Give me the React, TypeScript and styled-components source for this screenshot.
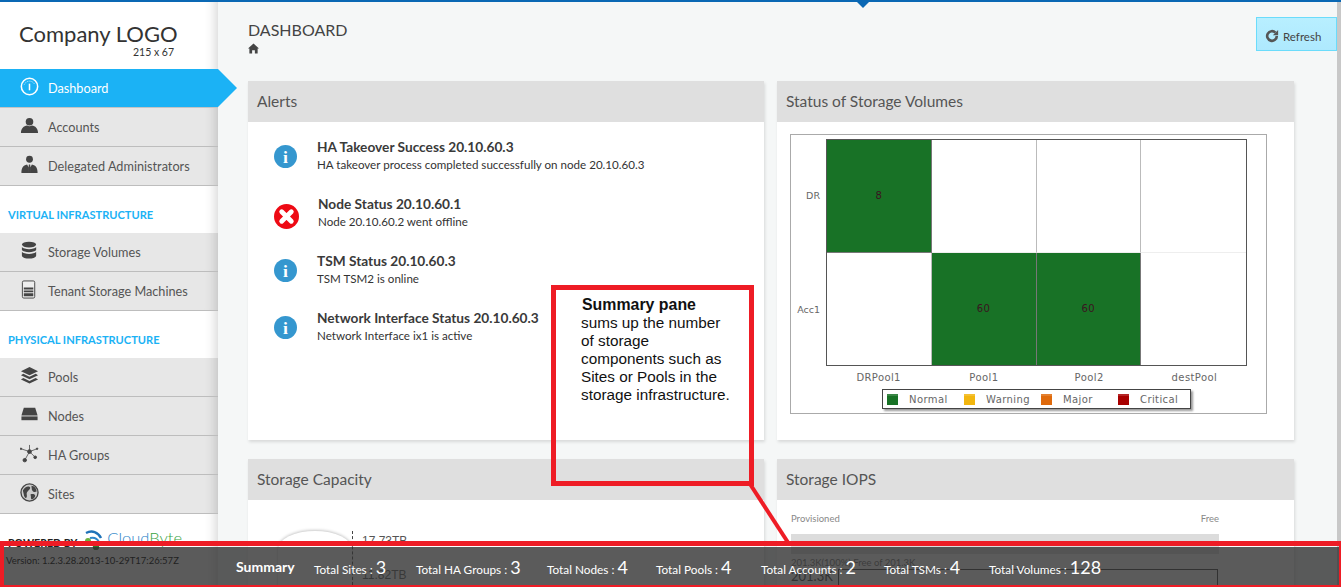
import * as React from 'react';
import styled, { createGlobalStyle } from 'styled-components';

const Global = createGlobalStyle`
    html, body { margin:0; padding:0; background:#f5f7f7; }
    body { font-family:"Lato","Noto Sans",sans-serif; color:#444; }
    * { box-sizing:border-box; }
`

const Page = styled.div`
    position:relative;
    width:1341px;
    height:587px;
    overflow:hidden;
    border-top:2px solid #0a68b4;
    display:flex;
`
const Notch = styled.div`
    position:absolute;
    top:-1px;
    left:856px;
    border:7px solid transparent;
    border-top-color:#0a68b4;
    border-bottom:0;
`
const ScrollEdge = styled.div`
    position:absolute;
    top:0;
    right:0;
    bottom:0;
    width:4px;
    background:#c8c8c8;
`

/* sidebar */
const Sidebar = styled.aside`
    position:relative;
    z-index:2;
    width:218px;
    flex:none;
    background:#fff;
    box-shadow:inset -14px 0 12px -12px rgba(0,0,0,.18);
`
const Logo = styled.div`
    height:67px;
    padding:17px 0 0 19px;
    font-size:22px;
    line-height:30px;
    color:#333;
    small {
        display:block;
        font-size:10.5px;
        line-height:11px;
        margin:-2px 0 0 114px;
    }
`
const NavRow = styled.div<{ $active?: boolean }>`
    position:relative;
    height:39px;
    display:flex;
    align-items:center;
    padding-left:20px;
    gap:9px;
    font-size:12.7px;
    color:${p => p.$active ? '#fff' : '#555'};
    background:${p => p.$active ? '#1bb2f5' : '#e7e7e7'};
    border-bottom:1px solid ${p => p.$active ? '#c4c4c4' : '#bdbdbd'};
    box-shadow:${p => p.$active ? 'none' : 'inset -14px 0 12px -12px rgba(0,0,0,.18)'};
    svg { width:19px; height:19px; flex:none; margin-top:-3px; }
    ${p => p.$active && `
        &::after {
            content:'';
            position:absolute;
            left:100%;
            top:0;
            border-left:19px solid #1bb2f5;
            border-top:19px solid transparent;
            border-bottom:19px solid transparent;
        }
    `}
`
const NavHeading = styled.div`
    height:47px;
    padding:22px 0 0 8px;
    font-size:11.1px;
    line-height:14px;
    font-weight:700;
    color:#1bb2f5;
`
const Powered = styled.div`
    display:flex;
    align-items:center;
    height:40px;
    padding:18px 0 0 8px;
    font-size:10.6px;
    font-weight:700;
    color:#222;
    svg { width:22px; height:20px; margin:-6px 0 0 8px; flex:none; }
`
const BrandName = styled.span`
    font-size:16.5px;
    font-weight:300;
    color:#2e86c9;
    margin-top:-10px;
    em { font-style:normal; color:#3aa33f; }
`

/* content */
const Main = styled.main`
    flex:1;
    padding:17px 0 0 30px;
    min-width:0;
`
const PageHead = styled.div`
    position:relative;
    height:62px;
    h1 {
        margin:0;
        font-size:16px;
        font-weight:400;
        line-height:21px;
        color:#444;
    }
    svg { display:block; width:11px; height:11px; margin-top:3px; }
`
const RefreshButton = styled.button`
    position:absolute;
    top:-2px;
    left:1008px;
    width:81px;
    height:34px;
    display:flex;
    align-items:center;
    gap:4px;
    padding:4px 0 0 8px;
    font:11.5px "Lato","Noto Sans",sans-serif;
    color:#444;
    background:linear-gradient(#b8efff,#aee9fe);
    border:1px solid #6bdcfb;
    svg { width:14px; height:14px; margin:0; }
`
const Grid = styled.div`
    display:grid;
    grid-template-columns:516px 517px;
    grid-template-rows:359px 200px;
    column-gap:13px;
    row-gap:19px;
`
const Card = styled.section`
    background:#fff;
    box-shadow:1px 2px 3px rgba(0,0,0,.12);
`
const CardHead = styled.h2`
    margin:0;
    height:41px;
    padding:0 9px;
    font-size:15.5px;
    font-weight:400;
    line-height:41px;
    color:#555;
    background:#dfdfdf;
`
const AlertList = styled.div`
    padding:14px 0 0 26px;
    display:flex;
    flex-direction:column;
    gap:19px;
`
const AlertRow = styled.div<{ $large?: boolean }>`
    height:38px;
    display:flex;
    align-items:center;
    gap:${p => p.$large ? '19px' : '20px'};
    svg {
        width:${p => p.$large ? '25px' : '23px'};
        height:${p => p.$large ? '25px' : '23px'};
        flex:none;
        margin-top:${p => p.$large ? '8px' : '2px'};
    }
    b { display:block; font-size:13.7px; line-height:19px; color:#3a3a3a; }
    span { display:block; font-size:11.6px; line-height:17px; color:#333; }
`

/* heat map */
const ChartFrame = styled.div`
    margin:12px 0 0 13px;
    width:477px;
    height:280px;
    border:1px solid #aaa;
    display:grid;
    grid-template-columns:35px 421px;
    grid-template-rows:227px 23px 20px;
    padding-top:4px;
    font-family:"DejaVu Sans",sans-serif;
    font-size:10px;
    letter-spacing:.4px;
    color:#666;
`
const YAxis = styled.div`
    display:grid;
    grid-template-rows:1fr 1fr;
    text-align:right;
    padding-right:6px;
    font-size:9.5px;
    letter-spacing:0;
    div { align-self:center; }
`
const Heat = styled.div`
    display:grid;
    grid-template-columns:repeat(4,1fr);
    grid-template-rows:1fr 1fr;
    border:1px solid #555;
`
const HeatCell = styled.div<{ $on?: boolean }>`
    display:flex;
    align-items:center;
    justify-content:center;
    color:#3a1420;
    background:${p => p.$on ? '#187226' : '#fff'};
    border-right:1px solid ${p => p.$on ? '#777' : '#bbb'};
    border-bottom:1px solid ${p => p.$on ? '#777' : '#eee'};
    &:nth-child(4n) { border-right:0; }
    &:nth-child(n+5) { border-bottom:0; }
`
const XAxis = styled.div`
    grid-column:2;
    display:grid;
    grid-template-columns:repeat(4,1fr);
    align-items:center;
    text-align:center;
`
const Legend = styled.div`
    grid-column:2;
    justify-self:center;
    width:309px;
    height:20px;
    display:flex;
    align-items:center;
    padding-left:4px;
    background:#fff;
    border:1px solid #444;
    box-shadow:2px 2px 2px rgba(0,0,0,.4);
`
const LegendItem = styled.div<{ $w: number }>`
    width:${p => p.$w}px;
    display:flex;
    align-items:center;
    gap:11px;
`
const Swatch = styled.i<{ $c: string }>`
    width:11px;
    height:11px;
    background:${p => p.$c};
    box-shadow:inset 0 2px 0 rgba(255,255,255,.15);
`

/* lower cards */
const Capacity = styled.div`
    display:flex;
    padding:31px 0 0 30px;
    font-family:"Liberation Sans",sans-serif;
    font-size:12px;
    color:#555;
`
const Cylinder = styled.div`
    width:74px;
    height:60px;
    border-radius:50% 50% 0 0 / 30% 30% 0 0;
    background:#fff;
    box-shadow:0 -1px 3px rgba(0,0,0,.22);
`
const CapacityAxis = styled.div`
    width:10px;
    height:54px;
    border-left:1px dashed #444;
`
const CapacityLabels = styled.div`
    padding-top:3px;
    line-height:14px;
    display:flex;
    flex-direction:column;
    gap:20px;
`
const Iops = styled.div`
    padding:13px 14px 0;
    font-size:9.5px;
    color:#888;
`
const IopsLabels = styled.div`
    display:flex;
    justify-content:space-between;
    width:428px;
`
const IopsBar = styled.div`
    width:428px;
    height:20px;
    margin:10px 0 3px;
    background:#dcdcdc;
`
const IopsNote = styled.div`
    color:#666;
    line-height:12px;
`
const IopsValue = styled.div`
    display:flex;
    gap:5px;
    font-size:13px;
    color:#333;
    line-height:14px;
    i { width:380px; height:30px; border:1px solid #333; }
`

/* summary footer */
const SummaryBar = styled.footer`
    position:absolute;
    z-index:3;
    left:0;
    right:0;
    bottom:0;
    height:46px;
    border:solid #ee1c25;
    border-width:5px 2px 2px 4px;
    &::before {
        content:'';
        position:absolute;
        inset:1px 0 0 0;
        background:rgba(50,50,50,.8);
    }
`
const SummaryItems = styled.div`
    position:relative;
    display:flex;
    align-items:center;
    height:39px;
    padding:2px 0 0 2px;
    color:#fff;
    font-size:11.8px;
`
const Version = styled.div`
    width:230px;
    margin-top:-13px;
    font-size:9.5px;
    color:#222;
`
const SummaryTitle = styled.b`
    width:78px;
    font-size:14px;
`
const Stat = styled.div<{ $w: number }>`
    width:${p => p.$w}px;
    em { font-style:normal; font-size:18px; font-weight:400; margin-left:3px; }
`

/* annotation */
const Callout = styled.div`
    position:absolute;
    z-index:2;
    left:551px;
    top:283px;
    width:203px;
    height:201px;
    padding:5px 0 0 25px;
    border:5px solid #ee1c25;
    font-family:"Liberation Sans",sans-serif;
    font-size:15.3px;
    line-height:18px;
    color:#111;
    p { margin:0; width:153px; }
    b { display:block; font-size:15.9px; line-height:19px; padding-left:1px; }
`
const Leader = styled.svg`
    position:absolute;
    z-index:2;
    left:745px;
    top:480px;
    width:50px;
    height:70px;
`

const Gauge = () => (
    <svg viewBox="0 0 20 20" fill="none" stroke="#fff"><circle cx="10" cy="10" r="8.6" strokeWidth="1.6" /><path d="M10 7v7" strokeWidth="1.6" /><path d="M4.500 8a6 6 0 0 1 11 0" strokeWidth=".8" strokeDasharray="1 1" /></svg>
)
const Person = () => (
    <svg viewBox="0 0 20 20" fill="#444"><circle cx="10" cy="6" r="4" /><path d="M1 18c0-5 3-7.500 6.500-8 1.500 1 3.500 1 5 0 3.500.5 6.500 3 6.500 8z" /></svg>
)
const Admin = () => (
    <svg viewBox="0 0 20 20" fill="#444"><circle cx="10" cy="4.500" r="3.600" /><path d="M1.500 19c0-5 1.500-8 6-9l1.500 3-.5 6zM18.500 19c0-5-1.500-8-6-9L11 13l.5 6zM9.300 10h1.400l.8 9h-3z" /></svg>
)
const Database = () => (
    <svg viewBox="0 0 20 20" fill="#444"><ellipse cx="9.500" cy="3.800" rx="7.500" ry="3" /><path d="M2 6.400c2 3 13 3 15 0v3.200c-2 3-13 3-15 0zM2 11.400c2 3 13 3 15 0v4c-1 4-14 4-15 0z" /></svg>
)
const Machine = () => (
    <svg viewBox="0 0 20 20"><rect x="2.500" y="1" width="13" height="18" rx="1.500" fill="#eee" stroke="#444" /><path d="M4 8h10v2H4zM4 11h10v2H4zM4 14h10v3H4z" fill="#444" /></svg>
)
const Layers = () => (
    <svg viewBox="0 0 20 20" fill="#444"><path d="M10 1l9 4.400-9 4.400-9-4.400z" /><path d="M3.500 8.200L10 11.400l6.500-3.200L19 9.700 10 14 1 9.700z" /><path d="M3.500 12.600L10 15.800l6.500-3.200 2.500 1.500-9 4.400-9-4.400z" /></svg>
)
const Drive = () => (
    <svg viewBox="0 0 20 20" fill="#444"><path d="M4 3h12l2.500 8h-17z" /><rect x="1.500" y="12" width="17" height="4" /></svg>
)
const Network = () => (
    <svg viewBox="0 0 20 20" fill="#444" stroke="#444"><path d="M10 8L1 5M10 8l8-3M10 8V1M10 8l-5 9M10 8l6 6" strokeWidth=".8" /><circle cx="10" cy="8" r="2" /><circle cx="5" cy="17" r="1.800" /><circle cx="16" cy="14" r="1.400" /><circle cx="1" cy="5" r=".8" /><circle cx="18" cy="5" r=".8" /></svg>
)
const Globe = () => (
    <svg viewBox="0 0 20 20"><circle cx="10" cy="10" r="9" fill="#ccc" stroke="#444" strokeWidth="1.400" /><path d="M3 8c2-4 5-5 7-4s0 3-2 5 0 4-1 6-3-1-3-3zM12 3c3 0 5.500 3 5.500 6-2 1-4 .5-5-2zM11 12c2-1 5-.5 5 1.500s-3 4.500-4 3.500 0-3-1-5z" fill="#444" /></svg>
)
const Home = () => (
    <svg viewBox="0 0 12 12" fill="#444"><path d="M6 .5L12 6h-1.500v5.500h-3V8h-3v3.500h-3V6H0z" /></svg>
)
const Reload = () => (
    <svg viewBox="0 0 16 16" fill="none" stroke="#555" strokeWidth="3"><path d="M13.500 8a5.500 5.500 0 1 1-1.600-3.900" /><path d="M15 1v6H9z" fill="#555" stroke="none" /></svg>
)
const InfoIcon = () => (
    <svg viewBox="0 0 26 26"><circle cx="13" cy="13" r="13" fill="#3597cf" /><text x="13" y="20.500" textAnchor="middle" fontFamily="Liberation Serif, serif" fontWeight="700" fontSize="20" fill="#fff">i</text></svg>
)
const ErrorIcon = () => (
    <svg viewBox="0 0 26 26"><circle cx="13" cy="13" r="13" fill="#ee0a14" /><path d="M8 8l10 10M18 8L8 18" stroke="#fff" strokeWidth="5" strokeLinecap="round" /></svg>
)
const BrandMark = () => (
    <svg viewBox="0 0 22 20" fill="none"><path d="M1 3c6-3 12-1 15 5" stroke="#1f72b8" strokeWidth="2.500" /><path d="M5 8c4-1 7 0 9 4" stroke="#2e86c9" strokeWidth="2" /><circle cx="3" cy="11" r="3" fill="#6db33f" /><circle cx="11" cy="17" r="3.200" fill="#2c7a2c" /><circle cx="18" cy="13" r="1.800" fill="#6db33f" /></svg>
)

const topNav = [
    { label: 'Accounts', icon: <Person /> },
    { label: 'Delegated Administrators', icon: <Admin /> },
]
const virtualNav = [
    { label: 'Storage Volumes', icon: <Database /> },
    { label: 'Tenant Storage Machines', icon: <Machine /> },
]
const physicalNav = [
    { label: 'Pools', icon: <Layers /> },
    { label: 'Nodes', icon: <Drive /> },
    { label: 'HA Groups', icon: <Network /> },
    { label: 'Sites', icon: <Globe /> },
]
const alerts = [
    { title: 'HA Takeover Success 20.10.60.3', text: 'HA takeover process completed successfully on node 20.10.60.3' },
    { title: 'Node Status 20.10.60.1', text: 'Node 20.10.60.2 went offline', error: true },
    { title: 'TSM Status 20.10.60.3', text: 'TSM TSM2 is online' },
    { title: 'Network Interface Status 20.10.60.3', text: 'Network Interface ix1 is active' },
]
const stats = [
    { label: 'Total Sites :', value: '3', w: 102 },
    { label: 'Total HA Groups :', value: '3', w: 131 },
    { label: 'Total Nodes :', value: '4', w: 109 },
    { label: 'Total Pools :', value: '4', w: 105 },
    { label: 'Total Accounts :', value: '2', w: 123 },
    { label: 'Total TSMs :', value: '4', w: 105 },
    { label: 'Total Volumes :', value: '128', w: 120 },
]
const legend = [
    { label: 'Normal', color: '#187226', w: 77 },
    { label: 'Warning', color: '#f2b60f', w: 77 },
    { label: 'Major', color: '#df6a0c', w: 77 },
    { label: 'Critical', color: '#a80000', w: 70 },
]

const App: React.FC = () => {
    const renderNav = (items: { label: string, icon: React.ReactNode }[]) => items.map(item => (
        <NavRow key={item.label}>{item.icon}{item.label}</NavRow>
    ))
    return (
        <Page>
            <Global />
            <Sidebar>
                <Logo>Company LOGO<small>215 x 67</small></Logo>
                <NavRow $active><Gauge />Dashboard</NavRow>
                {renderNav(topNav)}
                <NavHeading>VIRTUAL INFRASTRUCTURE</NavHeading>
                {renderNav(virtualNav)}
                <NavHeading>PHYSICAL INFRASTRUCTURE</NavHeading>
                {renderNav(physicalNav)}
                <Powered>POWERED BY<BrandMark /><BrandName>Cloud<em>Byte</em></BrandName></Powered>
            </Sidebar>
            <Main>
                <PageHead>
                    <h1>DASHBOARD</h1>
                    <Home />
                    <RefreshButton><Reload />Refresh</RefreshButton>
                </PageHead>
                <Grid>
                    <Card>
                        <CardHead>Alerts</CardHead>
                        <AlertList>
                            {alerts.map(alert => (
                                <AlertRow key={alert.title} $large={alert.error}>
                                    {alert.error ? <ErrorIcon /> : <InfoIcon />}
                                    <div><b>{alert.title}</b><span>{alert.text}</span></div>
                                </AlertRow>
                            ))}
                        </AlertList>
                    </Card>
                    <Card>
                        <CardHead>Status of Storage Volumes</CardHead>
                        <ChartFrame>
                            <YAxis><div>DR</div><div>Acc1</div></YAxis>
                            <Heat>
                                <HeatCell $on>8</HeatCell><HeatCell /><HeatCell /><HeatCell />
                                <HeatCell /><HeatCell $on>60</HeatCell><HeatCell $on>60</HeatCell><HeatCell />
                            </Heat>
                            <XAxis><div>DRPool1</div><div>Pool1</div><div>Pool2</div><div>destPool</div></XAxis>
                            <Legend>
                                {legend.map(item => (
                                    <LegendItem key={item.label} $w={item.w}><Swatch $c={item.color} />{item.label}</LegendItem>
                                ))}
                            </Legend>
                        </ChartFrame>
                    </Card>
                    <Card>
                        <CardHead>Storage Capacity</CardHead>
                        <Capacity>
                            <Cylinder />
                            <CapacityAxis />
                            <CapacityLabels><span>17.73TB</span><span>11.82TB</span></CapacityLabels>
                        </Capacity>
                    </Card>
                    <Card>
                        <CardHead>Storage IOPS</CardHead>
                        <Iops>
                            <IopsLabels><span>Provisioned</span><span>Free</span></IopsLabels>
                            <IopsBar />
                            <IopsNote>201.3K(100%) Free of 201.3K</IopsNote>
                            <IopsValue>201.3K<i /></IopsValue>
                        </Iops>
                    </Card>
                </Grid>
            </Main>
            <Callout><p><b>Summary pane</b>sums up the number of storage components such as Sites or Pools in the storage infrastructure.</p></Callout>
            <Leader viewBox="0 0 50 70"><path d="M5 2L44 62" stroke="#ee1c25" strokeWidth="4" /></Leader>
            <SummaryBar>
                <SummaryItems>
                    <Version>Version: 1.2.3.28.2013-10-29T17:26:57Z</Version>
                    <SummaryTitle>Summary</SummaryTitle>
                    {stats.map(stat => (
                        <Stat key={stat.label} $w={stat.w}>{stat.label}<em>{stat.value}</em></Stat>
                    ))}
                </SummaryItems>
            </SummaryBar>
            <Notch />
            <ScrollEdge />
        </Page>
    )
}

export default App
